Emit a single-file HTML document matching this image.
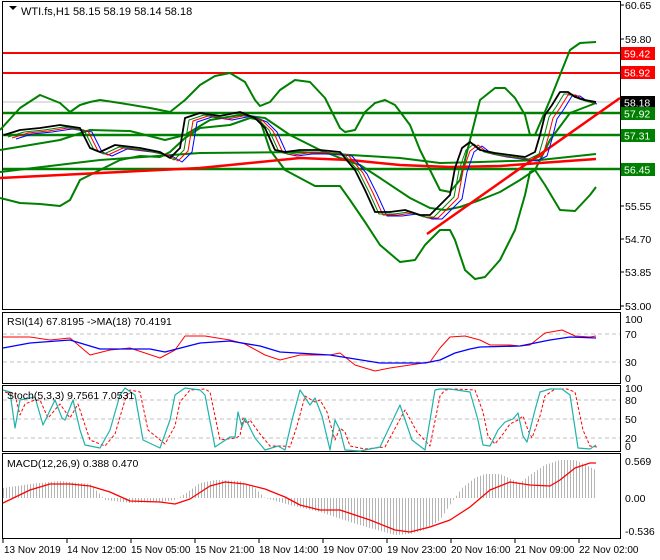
<!DOCTYPE html>
<html><head><meta charset="utf-8"><style>
html,body{margin:0;padding:0;background:#fff;}
svg{display:block;font-family:"Liberation Sans",sans-serif;font-size:11px;}
polyline{stroke-linejoin:round;}
</style></head><body>
<svg width="660" height="560" viewBox="0 0 660 560" xmlns="http://www.w3.org/2000/svg">
<defs>
<pattern id="hb" width="3" height="10" patternUnits="userSpaceOnUse"><rect x="0" y="0" width="1" height="10" fill="#b4b4b4"/></pattern>
</defs>
<rect width="660" height="560" fill="#fff"/>
<g fill="none" stroke="#000" stroke-width="1">
<rect x="2.5" y="1.5" width="618" height="308"/>
<rect x="2.5" y="312.5" width="618" height="71"/>
<rect x="2.5" y="385.5" width="618" height="66"/>
<rect x="2.5" y="453.5" width="618" height="85"/>
</g>
<line x1="3" y1="102" x2="620" y2="102" stroke="#c0c0c0"/>
<g stroke="#ff0000" stroke-width="2"><line x1="3" y1="53" x2="620" y2="53"/><line x1="3" y1="73" x2="620" y2="73"/></g>
<g stroke="#008000" stroke-width="2.5"><line x1="3" y1="113" x2="620" y2="113"/><line x1="3" y1="135" x2="620" y2="135"/><line x1="3" y1="169" x2="620" y2="169"/></g>
<g fill="none" stroke="#008000" stroke-width="2">
<polyline points="0,130 20,108 40,95 60,103 70,112 80,105 90,102 100,100 120,103 150,108 170,112 185,100 200,85 215,76 230,73 245,82 255,100 260,106 270,102 280,90 295,80 310,82 325,98 340,128 345,132 355,130 365,112 375,103 385,100 395,105 410,125 420,150 430,170 440,190 450,192 460,180 470,140 480,100 495,88 505,88 515,98 525,115 530,135 535,135 550,100 560,75 570,50 580,43 596,42"/>
<polyline points="0,198 20,203 40,204 60,206 70,200 80,180 100,170 120,160 140,156 160,157 170,152 185,138 200,128 230,125 250,118 260,120 270,150 285,170 300,178 315,186 340,186 350,200 365,222 380,245 400,262 415,260 425,245 440,230 450,230 455,240 465,270 475,279 485,277 500,260 515,230 525,195 530,172 535,170 545,185 560,210 575,211 590,195 596,187"/>
<polyline points="0,150 60,140 90,130 130,131 165,140 185,135 210,120 240,115 265,118 290,135 320,150 340,158 360,165 380,178 410,198 430,208 445,210 460,207 480,200 500,192 520,180 535,170 550,140 570,113 596,103"/>
<polyline points="0,172 100,160 200,153 300,152 400,158 440,163 480,162 540,160 596,154"/>
</g>
<polyline fill="none" stroke="#ff0000" stroke-width="2.5" points="0,178 100,173 200,168 300,158 350,160 400,165 450,167 500,166 540,163 596,159"/>
<line x1="427" y1="234" x2="620" y2="98" stroke="#ff0000" stroke-width="2.5"/>
<g fill="none" stroke-width="1">
<polyline stroke="#0000ff" transform="translate(12,4)" points="4,135 20,130 40,128 60,125 80,128 90,148 100,152 115,145 140,148 160,152 170,158 180,148 185,118 200,113 220,116 240,112 255,118 265,128 275,150 285,152 300,150 320,150 340,152 355,170 365,190 375,212 390,212 405,210 420,215 430,215 440,205 450,195 455,168 462,148 470,142 480,150 495,153 510,155 525,157 535,152 540,135 545,115 552,105 560,92 568,92 575,97 585,100"/>
<polyline stroke="#ff0000" transform="translate(8,3)" points="4,135 20,130 40,128 60,125 80,128 90,148 100,152 115,145 140,148 160,152 170,158 180,148 185,118 200,113 220,116 240,112 255,118 265,128 275,150 285,152 300,150 320,150 340,152 355,170 365,190 375,212 390,212 405,210 420,215 430,215 440,205 450,195 455,168 462,148 470,142 480,150 495,153 510,155 525,157 535,152 540,135 545,115 552,105 560,92 568,92 575,97 585,100 588,100"/>
<polyline stroke="#008000" transform="translate(4,2)" points="4,135 20,130 40,128 60,125 80,128 90,148 100,152 115,145 140,148 160,152 170,158 180,148 185,118 200,113 220,116 240,112 255,118 265,128 275,150 285,152 300,150 320,150 340,152 355,170 365,190 375,212 390,212 405,210 420,215 430,215 440,205 450,195 455,168 462,148 470,142 480,150 495,153 510,155 525,157 535,152 540,135 545,115 552,105 560,92 568,92 575,97 585,100 592,101"/>
</g>
<polyline fill="none" stroke="#000" stroke-width="1.8" points="4,135 20,130 40,128 60,125 80,128 90,148 100,152 115,145 140,148 160,152 170,158 180,148 185,118 200,113 220,116 240,112 255,118 265,128 275,150 285,152 300,150 320,150 340,152 355,170 365,190 375,212 390,212 405,210 420,215 430,215 440,205 450,195 455,168 462,148 470,142 480,150 495,153 510,155 525,157 535,152 540,135 545,115 552,105 560,92 568,92 575,97 585,100 596,102"/>
<path d="M9,6 h8 l-4,4 z" fill="#000"/>
<text x="21" y="15" fill="#000">WTI.fs,H1  58.15 58.19 58.14 58.18</text>
<g fill="#000" font-size="10.5">
<text x="625" y="9">60.65</text><text x="625" y="43">59.80</text>
<text x="625" y="210">55.55</text><text x="625" y="243">54.70</text>
<text x="625" y="276">53.85</text><text x="625" y="310">53.00</text>
</g>
<g font-size="10.5">
<rect x="621" y="47" width="34" height="13" fill="#ff0000"/><text x="624" y="57.5" fill="#fff">59.42</text>
<rect x="621" y="66" width="34" height="13" fill="#ff0000"/><text x="624" y="76.5" fill="#fff">58.92</text>
<rect x="621" y="96" width="34" height="13" fill="#000"/><text x="624" y="106.5" fill="#fff">58.18</text>
<rect x="621" y="107" width="34" height="13" fill="#008000"/><text x="624" y="117.5" fill="#fff">57.92</text>
<rect x="621" y="129" width="34" height="13" fill="#008000"/><text x="624" y="139.5" fill="#fff">57.31</text>
<rect x="621" y="163" width="34" height="13" fill="#008000"/><text x="624" y="173.5" fill="#fff">56.45</text>
</g>
<g stroke="#c0c0c0" stroke-dasharray="4 3"><line x1="3" y1="334" x2="620" y2="334"/><line x1="3" y1="362" x2="620" y2="362"/></g>
<polyline fill="none" stroke="#ff0000" points="3,337 30,337 50,340 70,338 90,355 110,350 130,348 160,358 175,350 185,336 205,336 230,340 245,344 265,355 280,360 300,355 330,355 340,353 355,365 375,371 390,368 410,365 430,362 440,348 450,337 465,336 480,340 490,345 510,345 520,346 530,345 545,333 562,330 575,336 590,337 596,336"/>
<polyline fill="none" stroke="#0000ff" stroke-width="1.3" points="3,348 30,343 70,340 100,349 150,349 165,352 200,343 230,341 260,346 280,352 330,355 380,363 425,363 440,360 455,353 470,349 480,347 520,346 550,340 570,337 596,338"/>
<text x="7" y="325" fill="#000" font-size="10.5">RSI(14) 67.8195  -&gt;MA(18) 70.4191</text>
<g fill="#000" font-size="10.5"><text x="625" y="323">100</text><text x="625" y="338">70</text><text x="625" y="366">30</text><text x="625" y="382">0</text></g>
<g stroke="#c0c0c0" stroke-dasharray="4 3"><line x1="3" y1="400" x2="620" y2="400"/><line x1="3" y1="419" x2="620" y2="419"/><line x1="3" y1="438" x2="620" y2="438"/></g>
<polyline fill="none" stroke="#ff0000" stroke-dasharray="3 2" transform="translate(5,0)" points="0,392 10,395 15,415 20,404 30,400 35,400 43,418 55,404 62,414 65,418 73,404 80,425 85,440 100,446 110,434 120,400 125,390 135,392 143,430 160,444 170,426 175,402 185,390 200,389 205,392 215,440 230,438 235,436 238,418 242,424 245,420 255,434 265,446 278,446 285,447 292,426 300,396 310,402 315,400 322,412 330,440 335,428 340,432 345,446 360,449 380,447 400,410 412,432 425,446 435,396 440,390 450,389 470,390 478,412 483,436 490,444 498,434 505,424 513,420 518,416 523,430 527,438 535,416 540,396 550,389 562,389 570,392 578,430 585,446 592,447"/>
<polyline fill="none" stroke="#20b2aa" stroke-width="1.2" points="3,390 10,392 15,428 20,400 30,398 35,397 43,425 55,400 62,418 65,420 73,400 80,430 85,445 100,448 110,430 120,395 125,388 135,395 143,440 160,448 170,420 175,395 185,388 200,390 205,395 215,447 230,437 235,437 238,412 242,427 245,418 255,438 265,450 278,446 285,450 292,420 300,390 310,405 315,398 322,416 330,450 335,420 340,430 345,450 360,451 380,447 400,405 412,440 425,450 435,390 440,389 450,389 470,392 478,420 483,445 490,446 498,430 505,422 513,419 518,413 523,436 527,442 535,410 540,392 550,389 562,389 570,395 578,448 590,449 596,445"/>
<text x="7" y="399" fill="#000" font-size="10.5">Stoch(5,3,3) 9.7561 7.0531</text>
<g fill="#000" font-size="10.5"><text x="625" y="392">100</text><text x="625" y="404">80</text><text x="625" y="423">50</text><text x="625" y="442">20</text><text x="625" y="450">0</text></g>
<polygon fill="url(#hb)" points="3,498 3,488 30,484 60,481 90,484 100,494 105,500 130,503 160,502 175,500 185,494 200,483 215,480 240,481 255,488 265,498 290,505 320,512 350,522 370,528 395,535 410,534 425,530 440,520 450,505 455,498 462,488 475,478 485,474 500,474 520,483 530,475 545,465 560,460 575,460 588,466 596,470 596,498"/>
<polyline fill="none" stroke="#ff0000" stroke-width="1.3" points="3,503 30,490 50,484 70,484 90,486 110,492 130,501 160,502 175,504 190,499 210,486 225,482 245,484 265,489 285,497 300,505 320,510 340,510 370,520 395,530 410,532 430,527 450,520 470,507 490,490 510,482 530,485 550,486 560,480 575,468 590,463 596,463"/>
<text x="7" y="467" fill="#000" font-size="10.5">MACD(12,26,9) 0.388 0.470</text>
<g fill="#000" font-size="10.5"><text x="625" y="465">0.569</text><text x="625" y="502">0.00</text><text x="625" y="535">-0.536</text></g>
<g stroke="#000"><line x1="620" y1="5" x2="624" y2="5"/><line x1="620" y1="39" x2="624" y2="39"/><line x1="620" y1="206" x2="624" y2="206"/><line x1="620" y1="239" x2="624" y2="239"/><line x1="620" y1="272" x2="624" y2="272"/><line x1="620" y1="306" x2="624" y2="306"/>
<line x1="3" y1="539" x2="3" y2="543"/><line x1="67" y1="539" x2="67" y2="543"/><line x1="131" y1="539" x2="131" y2="543"/><line x1="195" y1="539" x2="195" y2="543"/><line x1="259" y1="539" x2="259" y2="543"/><line x1="323" y1="539" x2="323" y2="543"/><line x1="387" y1="539" x2="387" y2="543"/><line x1="451" y1="539" x2="451" y2="543"/><line x1="515" y1="539" x2="515" y2="543"/><line x1="579" y1="539" x2="579" y2="543"/></g>
<g fill="#000" font-size="10">
<text x="4" y="553">13 Nov 2019</text><text x="67" y="553">14 Nov 12:00</text><text x="131" y="553">15 Nov 05:00</text><text x="195" y="553">15 Nov 21:00</text><text x="259" y="553">18 Nov 14:00</text><text x="323" y="553">19 Nov 07:00</text><text x="387" y="553">19 Nov 23:00</text><text x="451" y="553">20 Nov 16:00</text><text x="515" y="553">21 Nov 09:00</text><text x="579" y="553">22 Nov 02:00</text>
</g>
</svg>
</body></html>
